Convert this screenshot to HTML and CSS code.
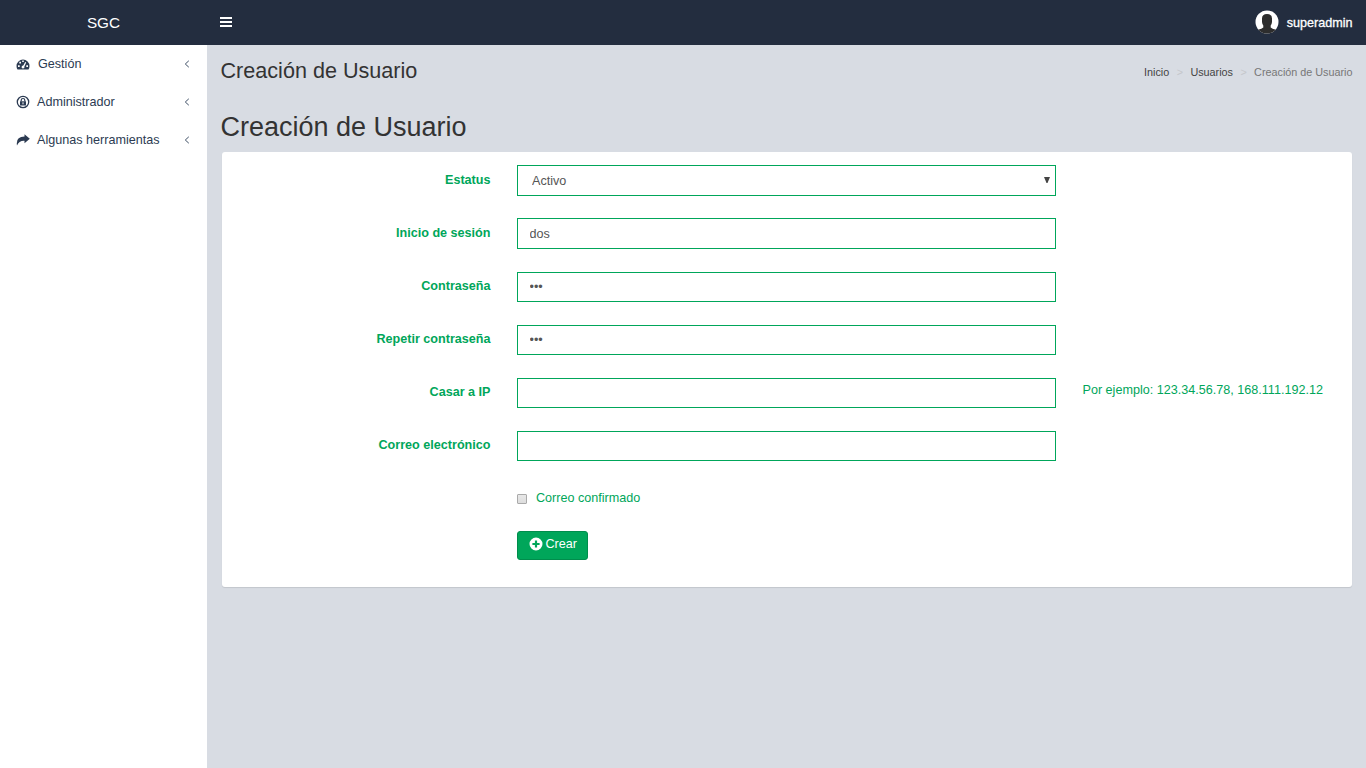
FILE: index.html
```html
<!DOCTYPE html>
<html lang="es">
<head>
<meta charset="utf-8">
<title>Creación de Usuario</title>
<link rel="stylesheet" href="styles.css">
</head>
<body>
<header class="topbar">
  <a class="brand">SGC</a>
  <svg class="menu-icon" viewBox="0 0 12 10"><path d="M0 0h12v2H0zM0 4h12v2H0zM0 8h12v2H0z"/></svg>
  <div class="user">
    <svg class="avatar" viewBox="0 0 24 24"><defs><clipPath id="round"><circle cx="12" cy="12" r="11.5"/></clipPath></defs><g clip-path="url(#round)"><path fill="#fff" d="M0 0h24v24H0z"/><path fill="#2d2d2d" d="M7 8.500Q7 4 12 4t5 4.500v3.500q-.2 2-1.300 3.500v2q1.300 1.500 5.300 2.200V24H3v-4.300q4-.7 5.300-2.200v-2Q7.200 14 7 12z"/></g></svg>
    <span class="username">superadmin</span>
  </div>
</header>
<div class="layout">
  <nav class="sidebar">
    <a class="nav-item first"><svg class="nav-icon" viewBox="0 0 14 14"><path fill-rule="evenodd" d="M.5 9a6.500 6.500 0 0 1 13 0q0 2-1 3.500h-11Q.5 11 .5 9zM2 8.200h1.700v1.700H2zM3.300 4.700H5v1.700H3.300zM6.200 3.400h1.600v1.700H6.200zM10.300 8.200H12v1.700h-1.700zM9.200 5l1 .4-1.800 4.200q.5 1.900-1.400 2-1.900-.4-1.300-2.200.5-.8 1.600-.8z"/></svg><span>Gestión</span><svg class="chevron" viewBox="0 0 6 8"><path d="M4.800.8 1.300 4l3.500 3.200"/></svg></a>
    <a class="nav-item"><svg class="nav-icon" viewBox="0 0 14 14"><circle cx="7" cy="7" r="5.700" fill="none" stroke="#2c3b52" stroke-width="1.300"/><path d="M4 6.300h6v4.200H4z"/><path fill="none" stroke="#2c3b52" stroke-width="1.200" d="M5.200 6.500V5.200q0-1.700 1.800-1.700t1.800 1.700v1.300"/><path stroke="#fff" d="M7 7.300v2"/></svg><span>Administrador</span><svg class="chevron" viewBox="0 0 6 8"><path d="M4.800.8 1.300 4l3.500 3.200"/></svg></a>
    <a class="nav-item"><svg class="nav-icon" viewBox="0 0 14 14"><path d="M8.500 1.200 13.800 5.700l-5.300 4.500V7.800Q3 7.500 1 12.500-.5 3.700 8.500 3.600z"/></svg><span>Algunas herramientas</span><svg class="chevron" viewBox="0 0 6 8"><path d="M4.800.8 1.300 4l3.500 3.200"/></svg></a>
  </nav>
  <main class="content">
    <div class="content-header">
      <h1>Creación de Usuario</h1>
      <div class="breadcrumb"><a>Inicio</a><i>&gt;</i><a>Usuarios</a><i>&gt;</i><span>Creación de Usuario</span></div>
    </div>
    <h2>Creación de Usuario</h2>
    <form class="box">
      <div class="row"><label>Estatus</label><div class="select-wrap"><select class="field select"><option>Activo</option></select><svg class="arrow" viewBox="0 0 6 6"><path d="M0 0h6L3.500 6h-1z"/></svg></div></div>
      <div class="row"><label>Inicio de sesión</label><input class="field" value="dos"></div>
      <div class="row"><label>Contraseña</label><input class="field short" type="password" value="dos"></div>
      <div class="row"><label>Repetir contraseña</label><input class="field short" type="password" value="dos"></div>
      <div class="row"><label>Casar a IP</label><input class="field short"><span class="hint">Por ejemplo: 123.34.56.78, 168.111.192.12</span></div>
      <div class="row"><label>Correo electrónico</label><input class="field short"></div>
      <div class="check-row"><input type="checkbox" class="check"><span>Correo confirmado</span></div>
      <button class="create" type="button"><svg viewBox="0 0 14 14"><path fill-rule="evenodd" d="M7 .5a6.500 6.500 0 1 0 0 13 6.500 6.500 0 0 0 0-13zM5.900 3.400h2.200v2.500h2.500v2.200H8.100v2.500H5.900V8.100H3.400V5.900h2.500z"/></svg>Crear</button>
    </form>
  </main>
</div>
</body>
</html>
```
FILE: styles.css
```css
* { box-sizing: border-box; }
body { margin: 0; height: 768px; overflow: hidden; font-family: "Liberation Sans", Arial, sans-serif; font-size: 12.6px; line-height: 18px; color: #333; background: #d8dce3; }
.topbar { display: flex; align-items: center; height: 45px; background: #232d3f; color: #fff; }
.brand { width: 207px; text-align: center; font-size: 15.3px; }
.menu-icon { width: 12px; height: 10px; margin: 0 0 1px 13px; fill: #fff; }
.user { display: flex; align-items: center; gap: 8px; margin: 0 13.500px 0 auto; }
.avatar { width: 24px; height: 24px; margin-bottom: 1px; }
.username { -webkit-text-stroke: .3px #fff; }
.layout { display: flex; height: 723px; }
.sidebar { flex: none; width: 207px; background: #fff; padding-right: 17px; }
.nav-item { display: flex; align-items: center; height: 38.500px; padding: 0 0 1px 16px; color: #2c3b52; }
.nav-item span { margin-left: 7px; }
.nav-item.first { height: 38px; }
.nav-item.first span { margin-left: 8px; }
.nav-icon { width: 14px; height: 14px; fill: #2c3b52; }
.chevron { width: 6px; height: 8px; margin-left: auto; fill: none; stroke: #3f4f66; }
.content { flex: 1; min-width: 0; padding: 0 13.500px 0 14px; }
.content-header { display: flex; justify-content: space-between; padding-top: 14px; }
h1, h2 { margin: 0 0 0 -.5px; font-weight: 400; color: #333; }
h1 { font-size: 21.6px; line-height: 24px; }
h2 { font-size: 27px; line-height: 30px; margin-top: 29px; }
.breadcrumb { font-size: 10.8px; padding-top: 4px; color: #777; }
.breadcrumb a { color: #444; }
.breadcrumb i { font-style: normal; color: #c5c7cb; margin: 0 7.400px; }
.box { width: 1130px; height: 435px; margin: 10px 0 0 1px; padding-top: 13px; background: #fff; border-radius: 3px; box-shadow: 0 1px 1px rgba(0,0,0,.1); }
.row { display: flex; height: 53.100px; }
.row:nth-child(2) { height: 53.600px; }
label { width: 268.500px; margin: 6px 26.500px 0 0; text-align: right; font-weight: 700; color: #00a65a; }
.row:nth-child(n+3) label { margin-top: 5.200px; }
.row:nth-child(6) label { margin-top: 4.600px; }
.field { width: 539px; height: 31px; margin: 0; padding: 1px 11.500px 0; border: 1px solid #00a65a; border-radius: 0; background: #fff; color: #555; font: 12.6px "Liberation Sans", Arial, sans-serif; }
.field.short { height: 30px; padding-top: 0; }
.select-wrap { position: relative; height: 31px; }
.select { appearance: none; padding-left: 14px; }
.arrow { position: absolute; right: 6px; top: 12px; width: 6px; height: 6px; fill: #444; }
.hint { margin: 3px 0 0 26.500px; color: #00a65a; }
.check-row { display: flex; align-items: flex-start; height: 46.900px; padding: 5px 0 0 295px; color: #00a65a; }
.check { appearance: none; width: 10px; height: 10px; margin: 5px 9px 0 0; border: 1px solid #aaa; border-radius: 1px; background: linear-gradient(#e8e8e8, #ddd); }
.create { display: flex; align-items: center; gap: 2.500px; width: 71px; height: 29px; margin-left: 295px; padding: 0 0 2px 11px; border: 1px solid #008d4c; border-radius: 3px; background: #00a65a; color: #fff; font: 12.6px "Liberation Sans", Arial, sans-serif; }
.create svg { width: 14px; height: 14px; margin-bottom: 1px; fill: #fff; }
```
